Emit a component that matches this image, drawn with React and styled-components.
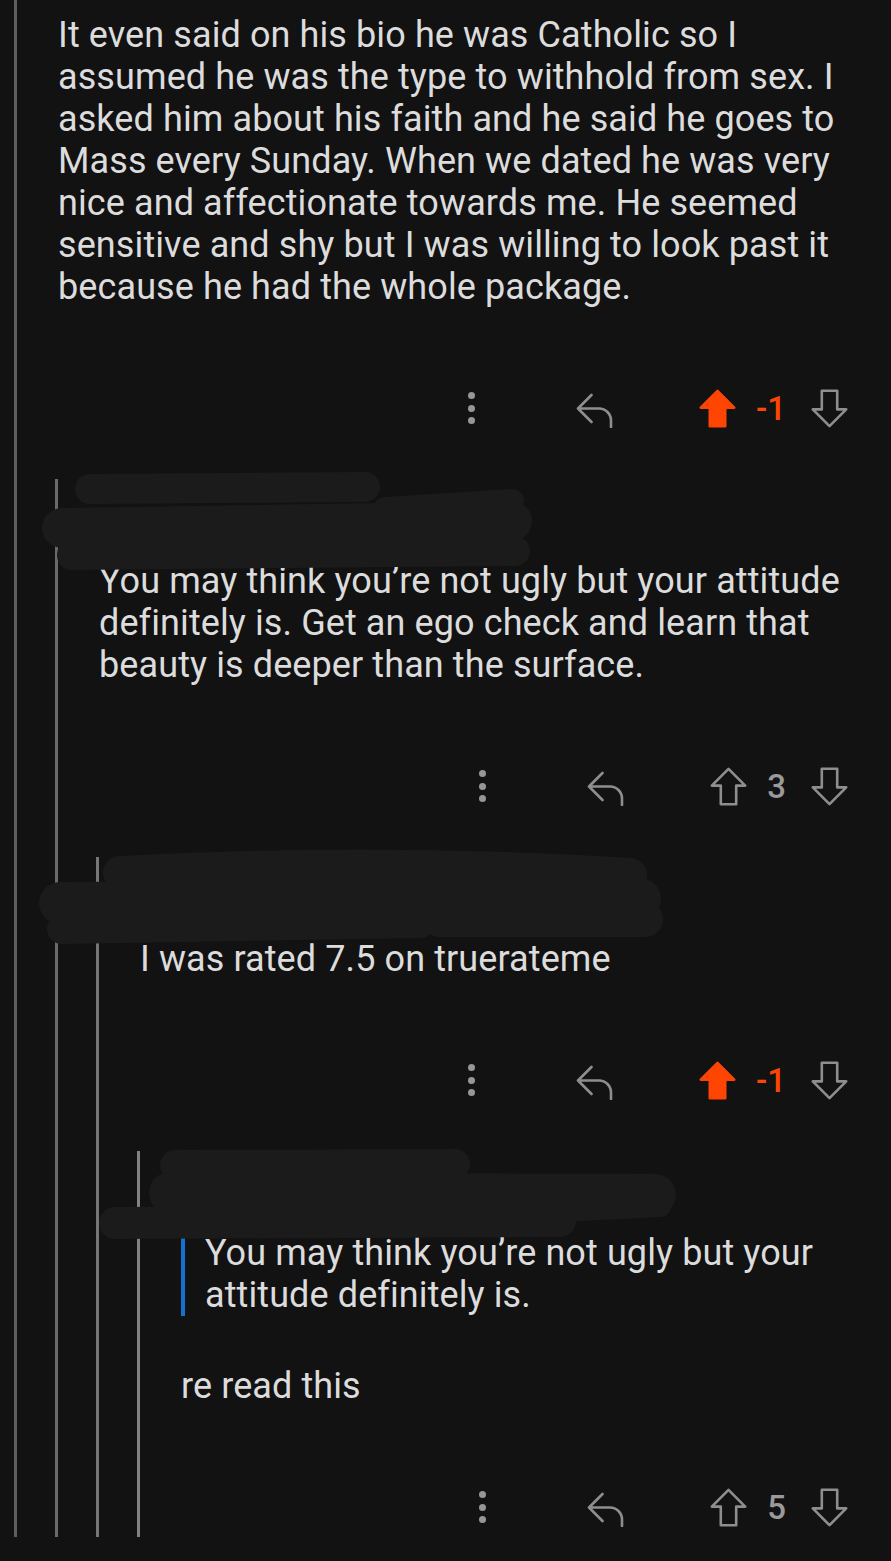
import React from "react";
import styled, { createGlobalStyle } from "styled-components";

const Global = createGlobalStyle`
  html, body { margin: 0; padding: 0; background: #121212; }
  body { font-family: Roboto, "Noto Sans", Arial, sans-serif; }
`;

const Page = styled.div`
  width: 891px;
  min-height: 1561px;
  box-sizing: border-box;
  padding-bottom: 24px;
  background: #121212;
  overflow: hidden;
`;

const RAIL_COLORS = ["#5e5e5e", "#6a6a6a", "#767676", "#828282"];

const Thread = styled.div`
  display: flex;
  margin-top: ${(p) => (p.$depth > 0 ? "41px" : "0")};
`;

const Rail = styled.div`
  flex: 0 0 3px;
  margin-left: 14px;
  margin-right: 24px;
  background: ${(p) => RAIL_COLORS[p.$depth]};
`;

const Content = styled.div`
  flex: 1;
  min-width: 0;
`;

const Header = styled.div`
  position: relative;
  height: 81px;
`;

const Scribble = styled.svg`
  position: absolute;
  top: 0;
  left: ${(p) => -p.$offset}px;
  width: 891px;
  height: 100px;
  overflow: visible;
  pointer-events: none;
  path {
    fill: none;
    stroke: #1b1b1b;
    stroke-linecap: round;
    stroke-linejoin: round;
  }
`;

const Body = styled.div`
  padding: ${(p) => (p.$first ? "14px" : "0")} 29px 0 17px;
  color: #dcdcdc;
  font-size: 36px;
  line-height: 42px;
  letter-spacing: 0.1px;
`;

const Para = styled.p`
  margin: 0;
`;

const Quote = styled.blockquote`
  margin: 0 0 49px 0;
  padding-left: 20px;
  border-left: 4px solid #1572cc;
`;

const Actions = styled.div`
  display: flex;
  justify-content: flex-end;
  align-items: center;
  height: 60px;
  margin-top: 70px;
  padding-right: 43px;
`;

const Dots = styled.div`
  display: flex;
  flex-direction: column;
  gap: 5.5px;
  margin-right: 101px;
  span {
    width: 7px;
    height: 7px;
    border-radius: 50%;
    background: #979797;
  }
`;

const IconBox = styled.svg`
  flex: 0 0 auto;
  display: block;
`;

const ReplyIcon = styled(IconBox)`
  margin-right: 86px;
  margin-top: 4px;
`;

const Score = styled.span`
  margin: 0 25px 0 20px;
  font-size: 33px;
  font-weight: 500;
  line-height: 1;
  color: ${(p) => (p.$up ? "#ff4500" : "#9a9a9a")};
`;

const Reply = () => (
  <ReplyIcon width="37" height="35" viewBox="0 0 37 35">
    <path
      d="M2 15.5 L15.5 2 M2 15.5 L15.5 29 M2 15.5 H23 A12 12 0 0 1 35 27.5 V34"
      fill="none"
      stroke="#8e8e8e"
      strokeWidth="2.6"
      strokeLinecap="round"
      strokeLinejoin="round"
    />
  </ReplyIcon>
);

const ARROW = "M18.5 1.8 L35.2 18.6 H26.2 V37.2 H10.8 V18.6 H1.8 Z";

const UpIcon = ({ filled }) => (
  <IconBox width="37" height="39" viewBox="0 0 37 39">
    <path
      d={ARROW}
      fill={filled ? "#ff4500" : "none"}
      stroke={filled ? "#ff4500" : "#8e8e8e"}
      strokeWidth="2.6"
      strokeLinejoin="round"
    />
  </IconBox>
);

const DownIcon = () => (
  <IconBox width="37" height="39" viewBox="0 0 37 39" style={{ transform: "rotate(180deg)" }}>
    <path d={ARROW} fill="none" stroke="#8e8e8e" strokeWidth="2.6" strokeLinejoin="round" />
  </IconBox>
);

const ActionBar = ({ score, up }) => (
  <Actions>
    <Dots>
      <span />
      <span />
      <span />
    </Dots>
    <Reply />
    <UpIcon filled={up} />
    <Score $up={up}>{score}</Score>
    <DownIcon />
  </Actions>
);

const SCRIBBLES = {
  1: [
    ["M90 10 L365 8", 30],
    ["M385 30 L512 22", 24],
    ["M62 49 L512 42", 40],
    ["M72 76 L515 72", 30],
  ],
  2: [
    ["M120 16 Q380 2 630 18", 34],
    ["M60 46 L640 42", 42],
    ["M62 72 L420 66", 30],
    ["M440 62 L645 62", 36],
  ],
  3: [
    ["M175 14 L455 13", 30],
    ["M170 42 L655 44", 42],
    ["M115 72 L560 70", 32],
    ["M560 60 L660 55", 22],
  ],
};

const RedactedHeader = ({ depth }) => (
  <Header>
    <Scribble $offset={41 * (depth + 1)} viewBox="0 0 891 100">
      {SCRIBBLES[depth].map(([d, w], i) => (
        <path key={i} d={d} strokeWidth={w} />
      ))}
    </Scribble>
  </Header>
);

export default function App() {
  return (
    <Page>
      <Global />
      <Thread $depth={0}>
        <Rail $depth={0} />
        <Content>
          <Body $first>
            <Para>
              It even said on his bio he was Catholic so I assumed he was the type to withhold from
              sex. I asked him about his faith and he said he goes to Mass every Sunday. When we
              dated he was very nice and affectionate towards me. He seemed sensitive and shy but I
              was willing to look past it because he had the whole package.
            </Para>
          </Body>
          <ActionBar score="-1" up />

          <Thread $depth={1}>
            <Rail $depth={1} />
            <Content>
              <RedactedHeader depth={1} />
              <Body>
                <Para>
                  You may think you’re not ugly but your attitude definitely is. Get an ego check and
                  learn that beauty is deeper than the surface.
                </Para>
              </Body>
              <ActionBar score="3" />

              <Thread $depth={2}>
                <Rail $depth={2} />
                <Content>
                  <RedactedHeader depth={2} />
                  <Body>
                    <Para>I was rated 7.5 on truerateme</Para>
                  </Body>
                  <ActionBar score="-1" up />

                  <Thread $depth={3}>
                    <Rail $depth={3} />
                    <Content>
                      <RedactedHeader depth={3} />
                      <Body>
                        <Quote>
                          <Para>You may think you’re not ugly but your attitude definitely is.</Para>
                        </Quote>
                        <Para>re read this</Para>
                      </Body>
                      <ActionBar score="5" />
                    </Content>
                  </Thread>
                </Content>
              </Thread>
            </Content>
          </Thread>
        </Content>
      </Thread>
    </Page>
  );
}
